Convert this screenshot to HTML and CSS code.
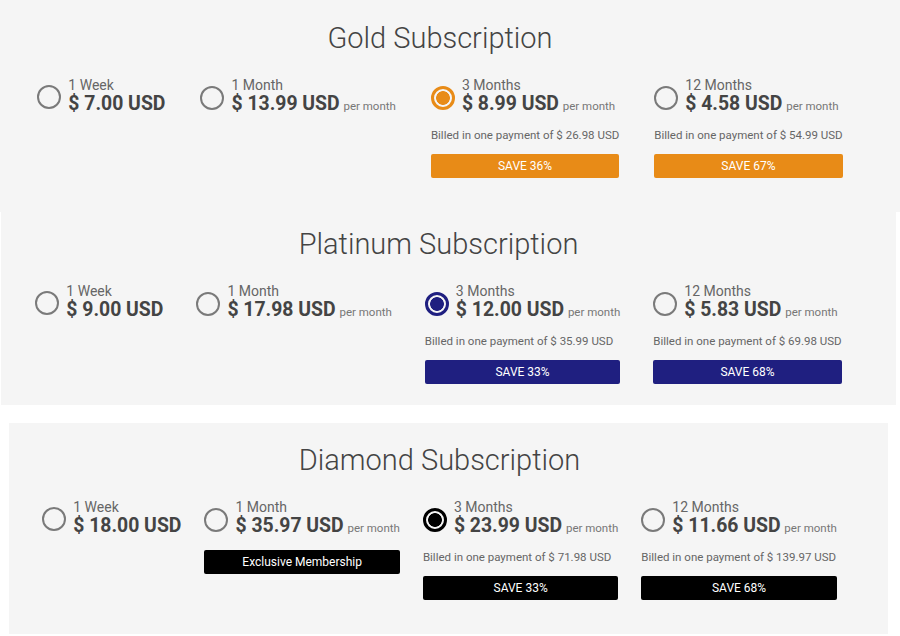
FILE: index.html
```html
<!DOCTYPE html>
<html>
<head>
<meta charset="utf-8">
<link rel="stylesheet" href="styles.css">
</head>
<body>
<section class="panel gold">
  <h2 class="title">Gold Subscription</h2>
  <div class="options">
    <div class="opt">
      <div class="head"><span class="radio"></span><div class="txt"><div class="label">1 Week</div><div class="price">$ 7.00 USD</div></div></div>
    </div>
    <div class="opt">
      <div class="head"><span class="radio"></span><div class="txt"><div class="label">1 Month</div><div class="price">$ 13.99 USD <span class="per">per month</span></div></div></div>
    </div>
    <div class="opt">
      <div class="head"><span class="radio on"></span><div class="txt"><div class="label">3 Months</div><div class="price">$ 8.99 USD <span class="per">per month</span></div></div></div>
      <div class="billed">Billed in one payment of $ 26.98 USD</div>
      <div class="save">SAVE 36%</div>
    </div>
    <div class="opt">
      <div class="head"><span class="radio"></span><div class="txt"><div class="label">12 Months</div><div class="price">$ 4.58 USD <span class="per">per month</span></div></div></div>
      <div class="billed">Billed in one payment of $ 54.99 USD</div>
      <div class="save">SAVE 67%</div>
    </div>
  </div>
</section>
<section class="panel platinum">
  <h2 class="title">Platinum Subscription</h2>
  <div class="options">
    <div class="opt">
      <div class="head"><span class="radio"></span><div class="txt"><div class="label">1 Week</div><div class="price">$ 9.00 USD</div></div></div>
    </div>
    <div class="opt">
      <div class="head"><span class="radio"></span><div class="txt"><div class="label">1 Month</div><div class="price">$ 17.98 USD <span class="per">per month</span></div></div></div>
    </div>
    <div class="opt">
      <div class="head"><span class="radio on"></span><div class="txt"><div class="label">3 Months</div><div class="price">$ 12.00 USD <span class="per">per month</span></div></div></div>
      <div class="billed">Billed in one payment of $ 35.99 USD</div>
      <div class="save">SAVE 33%</div>
    </div>
    <div class="opt">
      <div class="head"><span class="radio"></span><div class="txt"><div class="label">12 Months</div><div class="price">$ 5.83 USD <span class="per">per month</span></div></div></div>
      <div class="billed">Billed in one payment of $ 69.98 USD</div>
      <div class="save">SAVE 68%</div>
    </div>
  </div>
</section>
<section class="panel diamond">
  <h2 class="title">Diamond Subscription</h2>
  <div class="options">
    <div class="opt">
      <div class="head"><span class="radio"></span><div class="txt"><div class="label">1 Week</div><div class="price">$ 18.00 USD</div></div></div>
    </div>
    <div class="opt">
      <div class="head"><span class="radio"></span><div class="txt"><div class="label">1 Month</div><div class="price">$ 35.97 USD <span class="per">per month</span></div></div></div>
      <div class="save exclusive">Exclusive Membership</div>
    </div>
    <div class="opt">
      <div class="head"><span class="radio on"></span><div class="txt"><div class="label">3 Months</div><div class="price">$ 23.99 USD <span class="per">per month</span></div></div></div>
      <div class="billed">Billed in one payment of $ 71.98 USD</div>
      <div class="save">SAVE 33%</div>
    </div>
    <div class="opt">
      <div class="head"><span class="radio"></span><div class="txt"><div class="label">12 Months</div><div class="price">$ 11.66 USD <span class="per">per month</span></div></div></div>
      <div class="billed">Billed in one payment of $ 139.97 USD</div>
      <div class="save">SAVE 68%</div>
    </div>
  </div>
</section>
</body>
</html>
```
FILE: styles.css
```css
html, body {
  margin: 0;
  padding: 0;
  background: #ffffff;
}
body {
  width: 900px;
  height: 636px;
  overflow: hidden;
  font-family: Roboto, "Liberation Sans", sans-serif;
  color: #444;
}
.panel {
  background: #f5f5f5;
  box-sizing: border-box;
  display: flex;
  flex-direction: column;
  align-items: center;
}
.gold {
  width: 900px;
  height: 212px;
  padding: 20px 20px 0 0;
  --accent: #e88b17;
}
.platinum {
  width: 895px;
  height: 193px;
  margin-left: 1px;
  padding: 14px 20px 0 0;
  --accent: #1f1f80;
}
.diamond {
  width: 879px;
  height: 211px;
  margin: 18px 0 0 9px;
  padding: 19px 18px 0 0;
  --accent: #000000;
}
.title {
  margin: 0;
  font-weight: 300;
  font-size: 29px;
  line-height: 36px;
  color: #444;
}
.options {
  display: flex;
  align-items: flex-start;
  gap: 35px;
  margin-top: 21px;
}
.platinum .options { gap: 33px; }
.diamond .options { gap: 23px; margin-top: 21px; }
.opt {
  display: flex;
  flex-direction: column;
}
.head {
  display: flex;
  align-items: center;
  gap: 7px;
}
.radio {
  width: 24px;
  height: 24px;
  box-sizing: border-box;
  border: 2px solid #7a7a7a;
  border-radius: 50%;
  flex: none;
  margin-top: 2px;
}
.radio.on {
  border: 3px solid var(--accent);
  background: radial-gradient(circle, var(--accent) 0 6.5px, transparent 7.2px);
}
.label {
  font-size: 14px;
  line-height: 16px;
  color: #666;
}
.price {
  font-size: 19.4px;
  font-weight: 700;
  line-height: 22px;
  color: #444;
  white-space: nowrap;
}
.per {
  font-size: 11.5px;
  font-weight: 400;
  color: #777;
  margin-left: -1px;
}
.billed {
  margin-top: 11px;
  font-size: 11.5px;
  line-height: 14px;
  color: #666;
  white-space: nowrap;
}
.save {
  margin-top: 12px;
  height: 24px;
  border-radius: 2px;
  background: var(--accent);
  color: #fff;
  font-size: 12px;
  font-weight: 400;
  line-height: 24px;
  text-align: center;
}
.save.exclusive {
  margin-top: 11px;
}
```
